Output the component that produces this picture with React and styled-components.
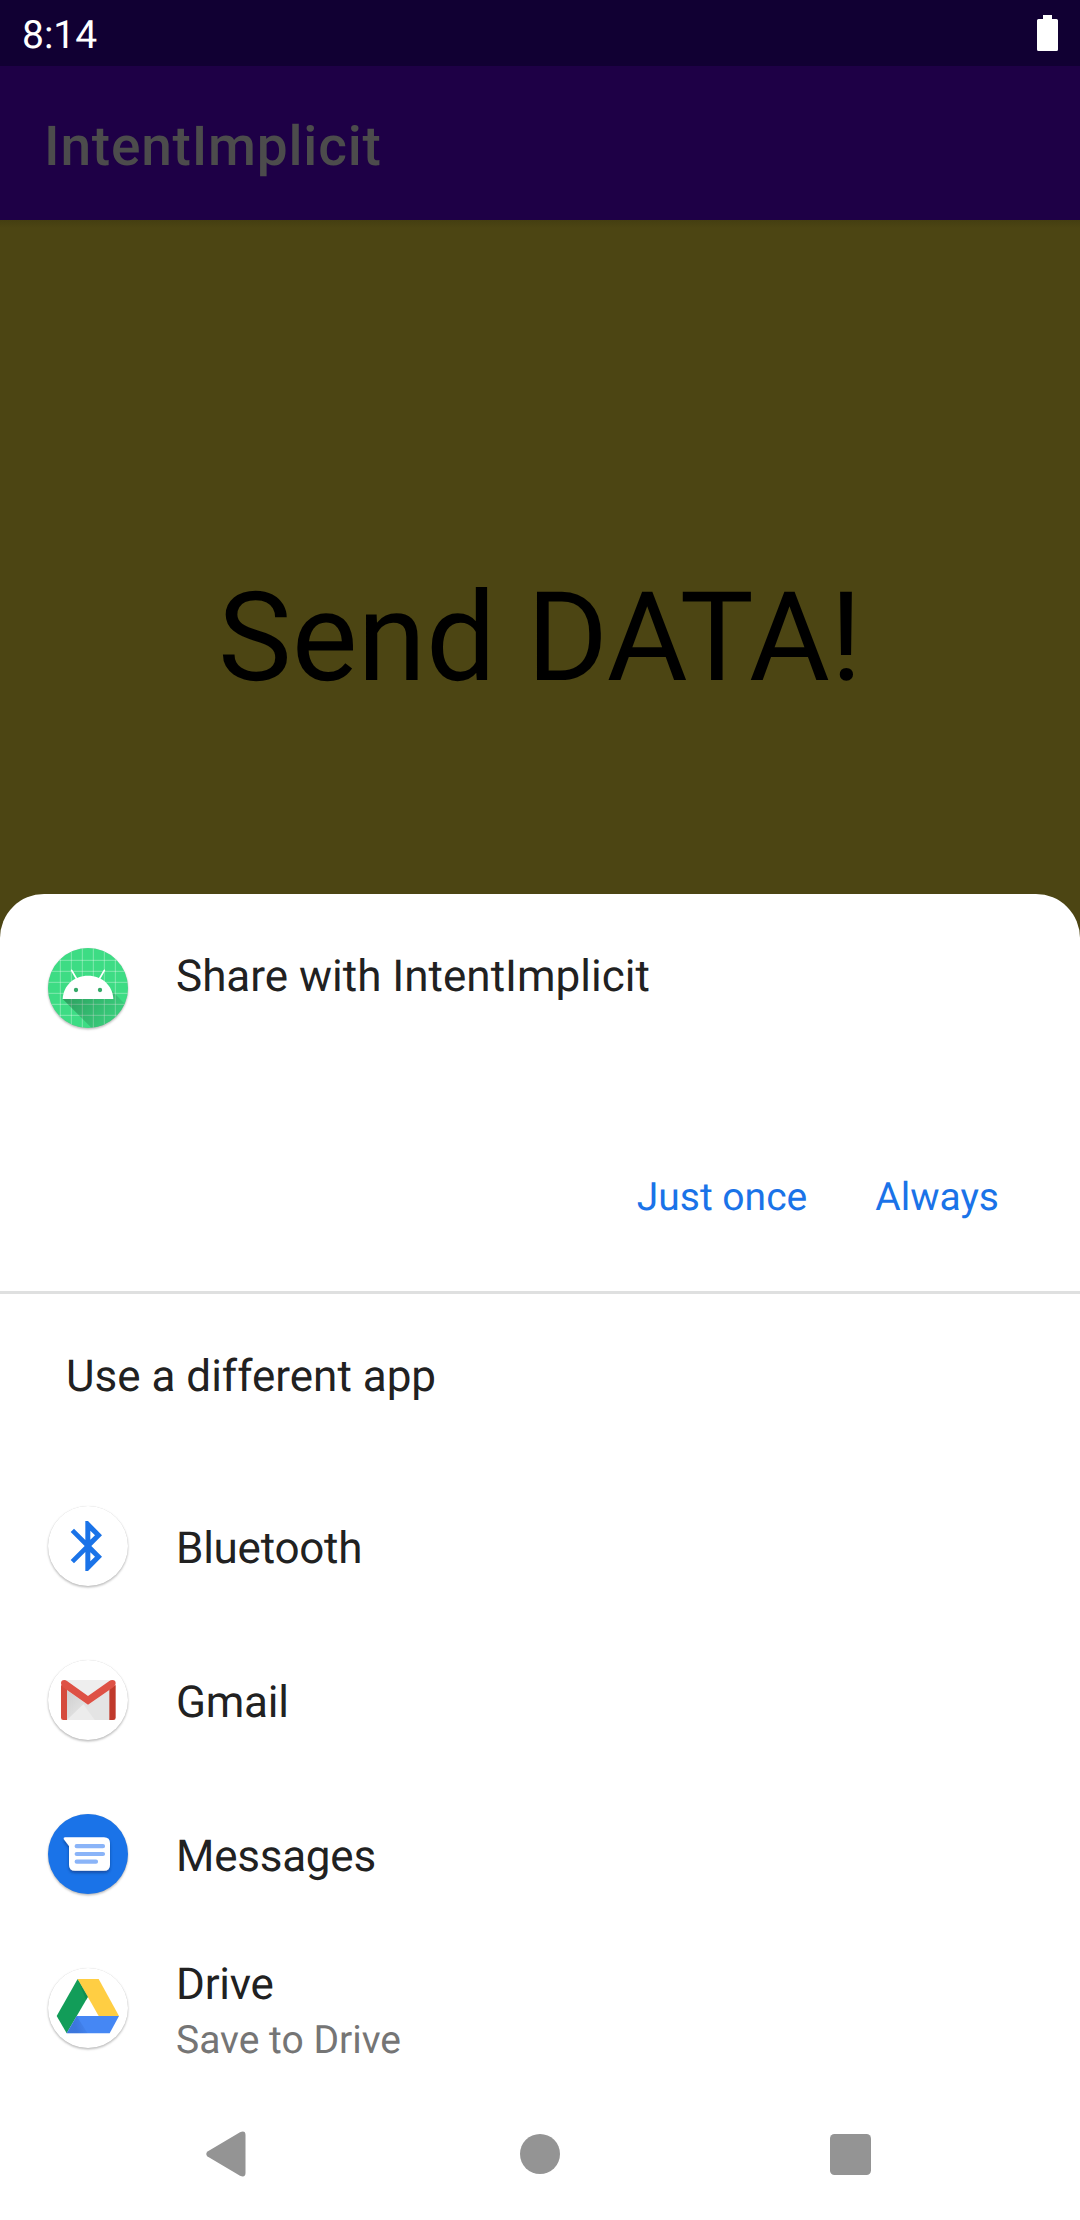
import React from "react";
import styled, { createGlobalStyle } from "styled-components";

const GlobalStyle = createGlobalStyle`
  * { box-sizing: border-box; }
  body {
    margin: 0;
    font-family: Roboto, "Noto Sans", sans-serif;
    text-rendering: geometricPrecision;
  }
`;

const Screen = styled.div`
  width: 1080px;
  height: 2220px;
  display: flex;
  flex-direction: column;
  background: #4c4513;
  overflow: hidden;
`;

const StatusBar = styled.header`
  height: 66px;
  display: flex;
  align-items: center;
  justify-content: space-between;
  padding: 3px 22px 0;
  background: #110033;
  color: #fff;
  font-size: 39px;
  line-height: 46px;
`;

const Battery = styled.svg`
  width: 21px;
  height: 36px;
  margin-bottom: 3px;
`;

const AppBar = styled.div`
  height: 154px;
  display: flex;
  align-items: center;
  padding: 8px 44px 0;
  background: #1e0046;
  color: #4c4c4c;
  font-size: 55px;
  font-weight: 500;
  line-height: 64px;
  letter-spacing: 0.8px;
`;

const Content = styled.main`
  height: 674px;
  display: flex;
  justify-content: center;
  padding-top: 346px;
  background: linear-gradient(#443e11, #4c4513 8px);
  color: #000;
  font-size: 124px;
  line-height: 145px;
  white-space: nowrap;
`;

const SheetBackdrop = styled.div`
  flex: 1;
  background: #4c4513;
`;

const Sheet = styled.section`
  height: 100%;
  display: flex;
  flex-direction: column;
  background: #fff;
  border-radius: 44px 44px 0 0;
`;

const Suggested = styled.div`
  height: 237px;
  display: flex;
  align-items: flex-start;
  gap: 44px;
  padding: 50px 44px 0;
`;

const SheetTitle = styled.div`
  padding-top: 6px;
  color: #212121;
  font-size: 44px;
  line-height: 52px;
`;

const Actions = styled.div`
  height: 160px;
  display: flex;
  justify-content: flex-end;
  align-items: flex-start;
  gap: 68px;
  padding: 43px 81px 0;
`;

const Action = styled.button`
  border: 0;
  padding: 0;
  background: none;
  color: #1a73e8;
  font: 400 39px/46px Roboto, sans-serif;
  text-rendering: inherit;
`;

const ListHeading = styled.h2`
  height: 178px;
  margin: 0;
  padding: 56px 66px 0;
  border-top: 3px solid #dfe0e0;
  color: #212121;
  font-size: 44px;
  font-weight: 400;
  line-height: 52px;
`;

const AppRow = styled.div`
  height: 154px;
  display: flex;
  align-items: center;
  gap: 44px;
  padding: 0 44px;
`;

const AppLabel = styled.div`
  padding-top: 4px;
`;

const AppName = styled.div`
  color: #212121;
  font-size: 44px;
  line-height: 52px;
  letter-spacing: -0.25px;
`;

const AppDetail = styled.div`
  margin-top: 7px;
  color: #757575;
  font-size: 39px;
  line-height: 46px;
`;

const Icon = styled.svg`
  width: 88px;
  height: 88px;
  flex: none;
  overflow: visible;
`;

const Disc = styled.circle`
  filter: drop-shadow(0 4px 3px rgba(0, 0, 0, 0.26)) drop-shadow(0 0 2px rgba(0, 0, 0, 0.16));
`;

const NavBar = styled.nav`
  height: 132px;
  margin-top: auto;
  display: grid;
  grid-template-columns: 44px 40px 41px;
  column-gap: 270px;
  align-items: center;
  padding-left: 206px;
`;

function AndroidIcon() {
  const lines = [91, 124, 157, 190, 223, 256];
  return (
    <Icon viewBox="42 42 264 264">
      <defs>
        <clipPath id="robotClip"><circle cx="174" cy="174" r="120" /></clipPath>
        <linearGradient id="robotShade" x1="120" y1="190" x2="240" y2="290" gradientUnits="userSpaceOnUse">
          <stop offset="0" stopColor="#000" stopOpacity="0.27" />
          <stop offset="1" stopColor="#000" stopOpacity="0.06" />
        </linearGradient>
      </defs>
      <Disc cx="174" cy="174" r="120" fill="#3ddc84" />
      <g clipPath="url(#robotClip)">
        {lines.map((p) => (
          <path key={p} d={`M${p} 50V300M50 ${p}H300`} stroke="#fff" strokeOpacity="0.42" strokeWidth="2.5" />
        ))}
        <path d="M98 207L188 297H310V248L246 182L250 207Z" fill="url(#robotShade)" />
      </g>
      <path d="M98 207C100 166 132 137 174 137S248 166 250 207Z" fill="#fff" />
      <path d="M125 121L140 147M223 121L208 147" stroke="#fff" strokeWidth="5" strokeLinecap="round" />
      <circle cx="138" cy="180" r="6.5" fill="#35a867" />
      <circle cx="210" cy="180" r="6.5" fill="#35a867" />
    </Icon>
  );
}

function BluetoothIcon() {
  return (
    <Icon viewBox="42 36 264 264">
      <Disc cx="174" cy="168" r="120" fill="#fff" />
      <path
        fillRule="evenodd"
        fill="#1a73e8"
        d="M166 93H174L216 136L184 168L216 200L174 243H166V186L132 220L122 210L164 168L122 126L132 116L166 150ZM181 122V149L195 136ZM181 187V214L195 200Z"
      />
    </Icon>
  );
}

function GmailIcon() {
  return (
    <Icon viewBox="42 33 264 264">
      <defs>
        <linearGradient id="mailShade" x1="120" y1="130" x2="230" y2="230" gradientUnits="userSpaceOnUse">
          <stop offset="0" stopColor="#cfcfcf" />
          <stop offset="0.5" stopColor="#e2e2e2" />
          <stop offset="1" stopColor="#ececec" />
        </linearGradient>
      </defs>
      <Disc cx="174" cy="165" r="120" fill="#fff" />
      <path d="M102 105H248V225H102Z" fill="#eee" />
      <path d="M111 136L174 180L238 136V225H111Z" fill="url(#mailShade)" />
      <path d="M111 225L160 178L174 187L238 140V225Z" fill="#e4e4e4" />
      <path d="M111 225L160 178L194 225Z" fill="#ececec" />
      <path d="M93 120L111 130V225H100Q93 225 93 218Z" fill="#d54b3d" />
      <path d="M238 130L257 120V218Q257 225 250 225H238Z" fill="#c0392b" />
      <path d="M93 115Q93 105 103 105Q107 105 111 108L174 153L238 108Q242 105 247 105Q257 105 257 115Q257 122 251 126L174 179L99 127Q93 122 93 115Z" fill="#de5145" />
    </Icon>
  );
}

function MessagesIcon() {
  return (
    <Icon viewBox="42 36 264 264">
      <defs>
        <filter id="bubbleShade" x="-20%" y="-20%" width="140%" height="150%">
          <feDropShadow dx="0" dy="6" stdDeviation="4" floodColor="#07357c" floodOpacity="0.65" />
        </filter>
      </defs>
      <Disc cx="174" cy="168" r="120" fill="#1a73e8" />
      <path d="M105 118H222Q240 118 240 136V200Q240 218 222 218H135Q117 218 117 200V144L101 123Q100 118 105 118Z" fill="#fff" filter="url(#bubbleShade)" />
      <path d="M140 144.500H219M140 168H219M140 191H198" stroke="#8ab4f8" strokeWidth="12.500" strokeLinecap="round" />
    </Icon>
  );
}

function DriveIcon() {
  return (
    <Icon viewBox="42 42 264 264">
      <defs>
        <linearGradient id="driveShade" x1="135" y1="225" x2="172" y2="215" gradientUnits="userSpaceOnUse">
          <stop offset="0" stopColor="#1a3c8c" stopOpacity="0.22" />
          <stop offset="1" stopColor="#1a3c8c" stopOpacity="0.02" />
        </linearGradient>
      </defs>
      <Disc cx="174" cy="174" r="120" fill="#fff" />
      <path d="M143 87L174 140L110 250L80 198Z" fill="#129d59" />
      <path d="M143 87H206L267 198H206Z" fill="#ffce43" />
      <path d="M140 198H267L239 250H110Z" fill="#4587f4" />
      <path d="M140 198L173 250H110Z" fill="url(#driveShade)" />
      <path d="M143 87L174 140L168 150Z" fill="#0b7a43" fillOpacity="0.4" />
    </Icon>
  );
}

const apps = [
  { name: "Bluetooth", Glyph: BluetoothIcon },
  { name: "Gmail", Glyph: GmailIcon },
  { name: "Messages", Glyph: MessagesIcon },
  { name: "Drive", detail: "Save to Drive", Glyph: DriveIcon },
];

export default function App() {
  return (
    <>
      <GlobalStyle />
      <Screen>
        <StatusBar>
          <span>8:14</span>
          <Battery viewBox="0 0 21 36">
            <path d="M6 0H15V4H19.500Q21 4 21 5.500V34.500Q21 36 19.500 36H1.500Q0 36 0 34.500V5.500Q0 4 1.500 4H6Z" fill="#fff" />
          </Battery>
        </StatusBar>
        <AppBar>IntentImplicit</AppBar>
        <Content>Send DATA!</Content>
        <SheetBackdrop>
          <Sheet>
            <Suggested>
              <AndroidIcon />
              <SheetTitle>Share with IntentImplicit</SheetTitle>
            </Suggested>
            <Actions>
              <Action>Just once</Action>
              <Action>Always</Action>
            </Actions>
            <ListHeading>Use a different app</ListHeading>
            {apps.map(({ name, detail, Glyph }) => (
              <AppRow key={name}>
                <Glyph />
                <AppLabel>
                  <AppName>{name}</AppName>
                  {detail && <AppDetail>{detail}</AppDetail>}
                </AppLabel>
              </AppRow>
            ))}
            <NavBar>
              <svg width="40" height="46" viewBox="0 0 40 46">
                <path d="M1.500 20.500L34 1.200Q39.500-1 39.500 4V42Q39.500 47 34 44.800L1.500 25.500Q-1 23 1.500 20.500Z" fill="#949494" />
              </svg>
              <svg width="40" height="40" viewBox="0 0 40 40">
                <circle cx="20" cy="20" r="20" fill="#949494" />
              </svg>
              <svg width="41" height="41" viewBox="0 0 41 41">
                <rect width="41" height="41" rx="4.500" fill="#949494" />
              </svg>
            </NavBar>
          </Sheet>
        </SheetBackdrop>
      </Screen>
    </>
  );
}
